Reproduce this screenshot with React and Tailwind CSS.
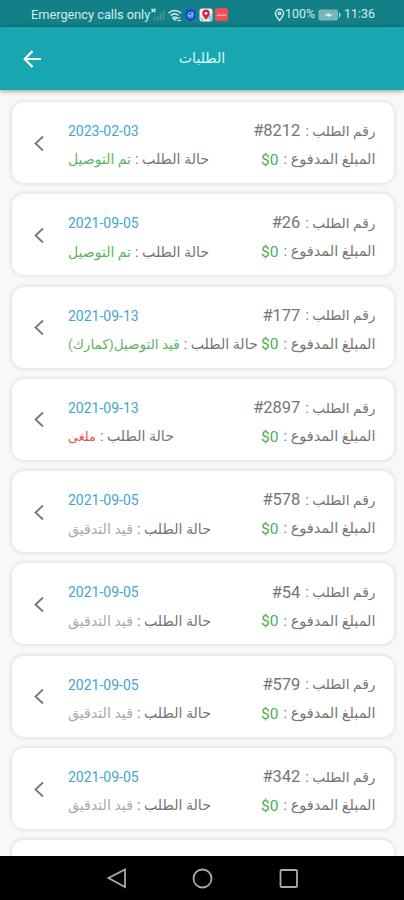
import { clsx } from "clsx";

const orders = [
  { id: "8212", date: "2023-02-03", status: "تم التوصيل", tone: "done" },
  { id: "26", date: "2021-09-05", status: "تم التوصيل", tone: "done" },
  { id: "177", date: "2021-09-13", status: "قيد التوصيل(كمارك)", tone: "shipping" },
  { id: "2897", date: "2021-09-13", status: "ملغى", tone: "cancelled" },
  { id: "578", date: "2021-09-05", status: "قيد التدقيق", tone: "pending" },
  { id: "54", date: "2021-09-05", status: "قيد التدقيق", tone: "pending" },
  { id: "579", date: "2021-09-05", status: "قيد التدقيق", tone: "pending" },
  { id: "342", date: "2021-09-05", status: "قيد التدقيق", tone: "pending" },
];

const tones = {
  done: "text-[14px] text-[#5db561]",
  shipping: "text-[13.6px] text-[#5db561]",
  cancelled: "text-[12.8px] text-[#e5534f]",
  pending: "text-[14.2px] text-[#a9a9a9]",
};

function StatusBar() {
  return (
    <div className="flex h-[27px] shrink-0 items-center bg-[#138087] pl-[31px] pr-[29px] pt-[2px] text-[12.4px] text-[#d3eeee]">
      <span className="w-[119px] whitespace-nowrap text-[12.75px]">Emergency calls only</span>

      <svg className="h-[14px] w-[15px]" viewBox="0 0 15 14" fill="none">
        <path d="M1.500 .8l4 3.500M5.500 .8l-4 3.500" stroke="#d3eeee" strokeWidth="1.4" />
        <path d="M4.500 12V9.500M7.500 12V7.500M10.500 12V5M13.500 12V2.500" stroke="#3f969b" strokeWidth="1.8" />
      </svg>

      <svg className="ml-[2px] h-[14px] w-[16px]" viewBox="0 0 16 14" fill="none" stroke="#d3eeee" strokeWidth="1.4">
        <path d="M1.500 5.200C5 1.600 10.500 1.600 14 5.200M3.800 7.500c2.300-2.200 5.400-2.200 7.700 0M5.800 9.700c1.200-1 2.800-1 4 0L7.800 12z" />
        <path d="M9.500 10h4M10 12.500h4" strokeWidth="1.1" />
      </svg>

      <svg className="ml-[1px] h-[14px] w-[13px]" viewBox="0 0 13 14" fill="none">
        <path d="M6.500 .8c2 1 3.500 1.200 5.200 1.400v5c0 3-2.200 5.200-5.200 6.300-3-1.100-5.200-3.300-5.200-6.300v-5C3 2 4.500 1.800 6.500 .8z" fill="#1550d8" />
        <circle cx="6.500" cy="7" r="2.500" stroke="#a8c8fa" />
        <path d="M5 7l1.300 1.300L9 4.500" stroke="#d7e6ff" />
      </svg>

      <svg className="ml-[2px] h-[14px] w-[14px]" viewBox="0 0 14 14">
        <rect x=".5" y=".5" width="13" height="13" rx="2.500" fill="#f5f1f1" />
        <path d="M1 9l4 2-2 2.500H2zM13 5v8h-2l-2-3z" fill="#9dcfd4" />
        <path d="M7 12C4.800 9 3.200 7.500 3.200 5.400a3.800 3.800 0 017.600 0C10.800 7.500 9.200 9 7 12z" fill="#d8244b" />
        <circle cx="7" cy="5.300" r="1.400" fill="#fff" />
      </svg>

      <svg className="ml-[2px] h-[13px] w-[13px]" viewBox="0 0 13 13">
        <rect width="13" height="13" rx="2.500" fill="#ee4f59" />
        <path d="M2 7.500h9M2.500 5.500v1M5 5.500v1M8 5.500v1M10.500 5.500v1" stroke="#ffb5b8" />
      </svg>

      <svg className="ml-auto h-[14px] w-[11px]" viewBox="0 0 11 14" fill="none" stroke="#d3eeee" strokeWidth="1.4">
        <path d="M5.500 12.500C3 9.500 1.500 7.800 1.500 5.300a4 4 0 018 0c0 2.500-1.500 4.200-4 7.200z" />
        <circle cx="5.500" cy="5.300" r="1.200" />
      </svg>
      <span className="w-[33px]">100%</span>

      <svg className="h-[12px] w-[23px]" viewBox="0 0 23 12">
        <rect x=".5" y=".5" width="19.500" height="11" rx="2" fill="#78b6ba" />
        <path d="M21 3.500q1.500 0 1.500 2.500T21 8.500z" fill="#b5dadb" />
        <path d="M6 6.500l5-2.500v1.500h4L10.500 8V6.500z" fill="#f0ffff" />
      </svg>
      <span className="ml-[3px] w-[31px]">11:36</span>
    </div>
  );
}

function Header() {
  return (
    <header className="z-10 grid h-[63px] shrink-0 grid-cols-3 items-center bg-[#18a7b0] px-5 text-white shadow-[0_1px_5px_rgba(0,0,0,0.4)]">
      <svg className="ml-[3px] h-[18px] w-[19px]" viewBox="0 0 19 18" fill="none" stroke="currentColor" strokeWidth="2.2">
        <path d="M18 9H2M9.500 1L1.700 9l7.800 8" />
      </svg>
      <h1 className="text-center text-[14.2px] text-[#dcf5f5]" dir="rtl">الطلبات</h1>
    </header>
  );
}

function OrderCard({ order }) {
  return (
    <div className="flex h-[81px] shrink-0 items-center rounded-[12px] bg-white pl-[22px] pr-[18px] shadow-[0_0_3px_2px_rgba(0,0,0,0.065)]">
      <svg className="mt-px h-[17px] w-[10px] shrink-0" viewBox="0 0 10 17" fill="none" stroke="#777" strokeWidth="1.8">
        <path d="M9 1.500L1.500 8.500 9 15.500" />
      </svg>

      <div className="ml-[24px] flex min-w-0 flex-1 flex-col pt-[6px] text-[14.2px] text-[#757575]" dir="rtl">
        <div className="flex h-[29px] items-center justify-between whitespace-nowrap">
          <div className="flex items-center gap-[5px]">
            <span className="text-[13.8px]">رقم الطلب :</span>
            <span className="pt-px text-[16.5px]" dir="ltr">#{order.id}</span>
          </div>
          <span className="pt-px text-[14px] text-[#42a5d0]" dir="ltr">{order.date}</span>
        </div>

        <div className="flex h-[29px] items-center justify-between whitespace-nowrap">
          <div className="flex items-center gap-[5px]">
            <span className="text-[14.5px]">المبلغ المدفوع :</span>
            <span className="pt-px text-[15.5px] text-[#4caf50]" dir="ltr">$0</span>
          </div>
          <div className="flex items-center gap-[4px]">
            <span>حالة الطلب :</span>
            <span className={clsx(tones[order.tone])}>{order.status}</span>
          </div>
        </div>
      </div>
    </div>
  );
}

function NavBar() {
  return (
    <nav className="z-10 flex h-[44px] shrink-0 items-center justify-center gap-[65px] bg-black">
      <svg className="h-[22px] w-[21px]" viewBox="0 0 21 22" fill="none" stroke="#aaa" strokeWidth="1.8">
        <path d="M19 2.500v17.500L2.500 11z" />
      </svg>
      <svg className="h-[22px] w-[21px]" viewBox="0 0 21 22" fill="none" stroke="#aaa" strokeWidth="1.8">
        <circle cx="10.500" cy="11.500" r="9" />
      </svg>
      <svg className="h-[22px] w-[21px]" viewBox="0 0 21 22" fill="none" stroke="#aaa" strokeWidth="1.8">
        <rect x="2.500" y="3" width="16.500" height="17" rx="1" />
      </svg>
    </nav>
  );
}

export default function App() {
  return (
    <div className="flex h-[900px] w-[404px] flex-col overflow-hidden bg-[#f8f8f8] font-['Roboto','DejaVu_Sans',sans-serif]">
      <StatusBar />
      <Header />

      <main className="flex min-h-0 flex-1 flex-col gap-[11.3px] overflow-hidden pl-[12px] pr-[10.5px] pt-[12px]">
        {orders.map((order) => (
          <OrderCard key={order.id} order={order} />
        ))}
        {/* top edge of the next card in the list */}
        <div className="h-[81px] shrink-0 rounded-[12px] bg-white shadow-[0_0_3px_2px_rgba(0,0,0,0.065)]" />
      </main>

      <NavBar />
    </div>
  );
}
